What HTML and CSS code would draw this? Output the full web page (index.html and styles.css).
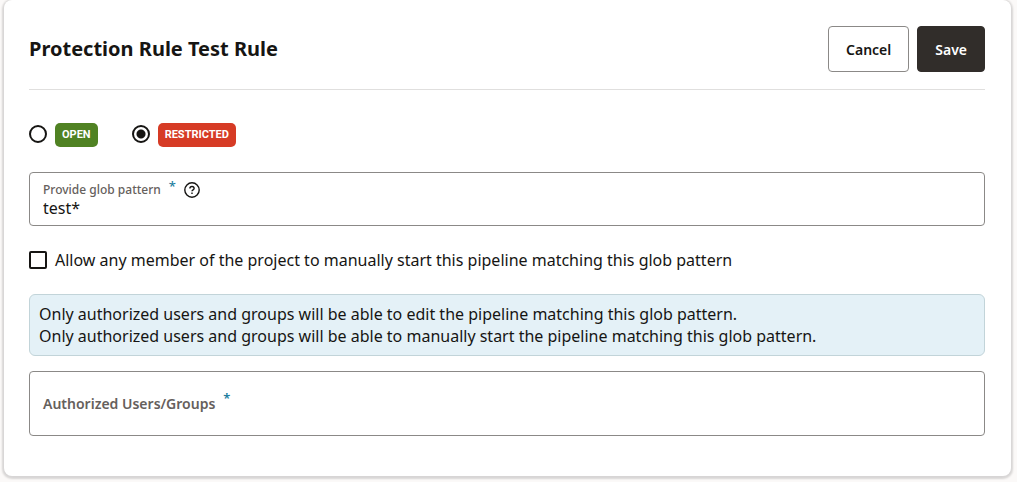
FILE: index.html
```html
<!DOCTYPE html>
<html lang="en">
  <head>
    <meta charset="UTF-8" />
    <meta name="viewport" content="width=device-width, initial-scale=1.0" />
    <title>Protection Rule</title>
    <link rel="stylesheet" href="styles.css">
  </head>
  <body>
    <form class="card">
      <header class="card-header">
        <h1>Protection Rule Test Rule</h1>
        <div class="actions">
          <button type="button" class="btn">Cancel</button>
          <button type="submit" class="btn btn-primary">Save</button>
        </div>
      </header>

      <div class="rule-type" role="radiogroup" aria-label="Rule type">
        <label>
          <input type="radio" name="type" value="open" />
          <span class="badge open">OPEN</span>
        </label>
        <label>
          <input type="radio" name="type" value="restricted" checked />
          <span class="badge restricted">RESTRICTED</span>
        </label>
      </div>

      <div class="field">
        <div class="field-label">
          <label for="pattern">Provide glob pattern</label>
          <span class="required">*</span>
          <svg
            class="help"
            width="16"
            height="16"
            viewBox="0 0 16 16"
            stroke="currentColor"
            stroke-width="1.4"
            fill="none"
          >
            <circle cx="8" cy="8" r="7.2" />
            <path d="M5.9 6.500c0-1.300 1-2 2.100-2s2.100.700 2.100 1.900c0 1.400-2.100 1.500-2.100 2.900" />
            <path d="M8 10.500v1.500" />
          </svg>
        </div>
        <input type="text" id="pattern" value="test*" />
      </div>

      <label class="allow">
        <input type="checkbox" name="allow" />
        <span>Allow any member of the project to manually start this pipeline matching this glob pattern</span>
      </label>

      <div class="info">
        <p>Only authorized users and groups will be able to edit the pipeline matching this glob pattern.</p>
        <p>Only authorized users and groups will be able to manually start the pipeline matching this glob pattern.</p>
      </div>

      <div class="field users">
        <label for="users">Authorized Users/Groups</label>
        <span class="required">*</span>
        <input type="text" id="users" />
      </div>
    </form>
  </body>
</html>
```
FILE: styles.css
```css
* {
  box-sizing: border-box;
}

body {
  margin: 0;
  padding: 0 6px 6px 4px;
  background: #fbf9f8;
  color: #161513;
  font-family: "Noto Sans", "Open Sans", sans-serif;
  font-size: 16px;
  line-height: 22px;
}

h1,
p {
  margin: 0;
}

.card {
  padding: 26px 26px 40px 25px;
  background: #fff;
  border-radius: 8px;
  box-shadow: 0 1px 2px 2px rgba(0, 0, 0, 0.14);
}

.card-header {
  display: flex;
  align-items: center;
  justify-content: space-between;
  padding-bottom: 17px;
  border-bottom: 1px solid #e0dfde;

  h1 {
    font-size: 20px;
    font-weight: 700;
  }
}

.actions {
  display: flex;
  gap: 8px;
}

.btn {
  height: 46px;
  padding: 0 17px;
  border: 1px solid #8b8987;
  border-radius: 4px;
  background: #fff;
  color: #161513;
  font: 600 14px "Noto Sans", "Open Sans", sans-serif;
  cursor: pointer;
}

.btn-primary {
  border-color: #312d2a;
  background: #312d2a;
  color: #fff;
}

.rule-type {
  display: flex;
  gap: 34px;
  margin: 33px 0 25px;

  label {
    display: flex;
    align-items: flex-start;
    gap: 8px;
  }

  input {
    appearance: none;
    width: 18px;
    height: 18px;
    margin: 2px 0 0;
    border: 2px solid #161513;
    border-radius: 50%;
    background: #fff;

    &:checked {
      background: radial-gradient(circle, #161513 4px, #fff 5px);
    }
  }
}

.badge {
  padding: 1px 7px;
  border-radius: 5px;
  color: #fff;
  font-family: Roboto, sans-serif;
  font-size: 11px;
  font-weight: 700;
}

.open {
  background: #508223;
}

.restricted {
  background: #d63b25;
}

.field {
  padding: 8px 13px;
  border: 1px solid #8b8987;
  border-radius: 4px;

  input {
    border: 0;
    outline: 0;
    padding: 0;
    background: transparent;
    color: inherit;
    font: inherit;
  }

  #pattern {
    display: block;
    width: 100%;
    height: 18px;
  }
}

.field-label {
  display: flex;
  align-items: center;
  height: 18px;
  color: #65605c;
  font-size: 12px;
  font-weight: 500;
}

.required {
  align-self: flex-start;
  margin-left: 8px;
  color: #227e9e;
  font-size: 13px;
  line-height: 10px;
}

.help {
  margin-left: 8px;
  color: #161513;
}

.allow {
  display: flex;
  align-items: center;
  gap: 8px;
  margin: 23px 0;

  input {
    appearance: none;
    width: 18px;
    height: 18px;
    margin: 0;
    border: 2px solid #161513;
    border-radius: 2px;
  }
}

.info {
  padding: 8px 9px;
  border: 1px solid #c2d4d9;
  border-radius: 6px;
  background: #e4f1f7;
}

.users {
  display: flex;
  align-items: center;
  height: 65px;
  margin-top: 15px;
  color: #65605c;
  font-size: 14px;
  font-weight: 600;

  .required {
    margin-top: 13px;
  }

  input {
    flex: 1;
  }
}
```
